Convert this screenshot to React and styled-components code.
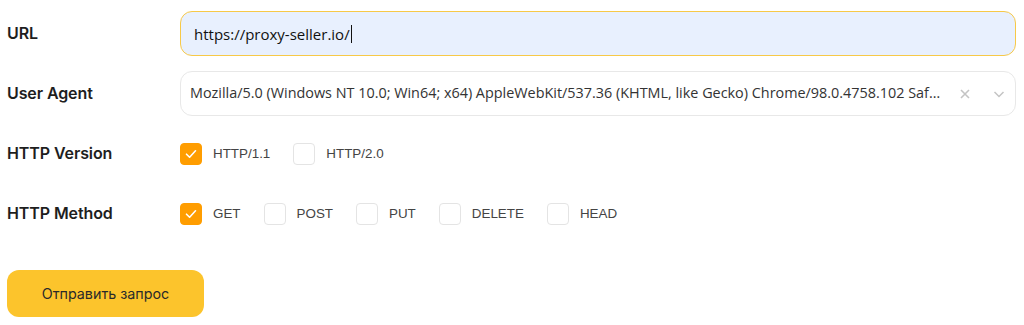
import React from "react"
import styled, { createGlobalStyle } from "styled-components"

const Global = createGlobalStyle`
  body {
    margin: 0;
    background: #fff;
    font-family: Inter, "Noto Sans", sans-serif;
    color: #222;
  }
`

const Form = styled.form`
  display: flex;
  flex-direction: column;
  gap: 15px;
  padding: 11px 8px 0 7px;
`

const Row = styled.div`
  display: grid;
  grid-template-columns: 173px minmax(0, 1fr);
  align-items: center;
  height: 45px;
`

const Label = styled.div`
  font-family: Inter, "Noto Sans", sans-serif;
  font-weight: 600;
  font-size: 16px;
  line-height: 20px;
  margin-top: -2px;
  color: #1e1e1e;
  letter-spacing: -0.1px;
`

const UrlInput = styled.div`
  display: flex;
  align-items: center;
  height: 45px;
  box-sizing: border-box;
  padding: 0 13px;
  background: #e8f0fe;
  border: 1px solid #f7c948;
  border-radius: 12px;
  font-family: "Open Sans", sans-serif;
  font-size: 15px;
  color: #111;
`

const Caret = styled.span`
  display: inline-block;
  width: 1px;
  height: 18px;
  background: #111;
  margin-left: 1px;
`

const Select = styled.div`
  display: flex;
  align-items: center;
  min-width: 0;
  height: 45px;
  box-sizing: border-box;
  padding: 0 9px 0 9px;
  border: 1px solid #e8e8e8;
  border-radius: 12px;
  gap: 13px;
`

const SelectValue = styled.div`
  flex: 1;
  min-width: 0;
  white-space: nowrap;
  overflow: hidden;
  text-overflow: ellipsis;
  font-family: "Open Sans", sans-serif;
  font-size: 14.4px;
  margin-top: -2px;
  color: #333;
`

const SelectIcons = styled.div`
  display: flex;
  flex-shrink: 0;
  align-items: center;
  gap: 21px;
  color: #c4c4c4;
`

const Options = styled.div`
  display: flex;
  align-items: center;
`

const Option = styled.label`
  display: flex;
  align-items: center;
  gap: 11px;
  margin-right: 23px;
  font-family: "Liberation Sans", Arial, sans-serif;
  font-size: 13.4px;
  color: #444;
`

const Box = styled.span`
  display: flex;
  align-items: center;
  justify-content: center;
  width: 22px;
  height: 22px;
  box-sizing: border-box;
  border-radius: 4px;
  background: ${p => (p.checked ? "#ff9d00" : "#fff")};
  border: 1px solid ${p => (p.checked ? "#ff9d00" : "#e4e4e4")};
`

const Button = styled.button`
  align-self: flex-start;
  margin-top: 19px;
  width: 197px;
  height: 47px;
  border: none;
  border-radius: 12px;
  background: #fcc42c;
  font-family: Inter, "Noto Sans", sans-serif;
  font-size: 14.3px;
  color: #2a2a2a;
`

const Check = () => (
  <svg width="14" height="14" viewBox="0 0 14 14" fill="none">
    <path d="M2.5 7.2 L5.6 10.2 L11.5 3.8" stroke="#fff" strokeWidth="1.6" strokeLinecap="round" strokeLinejoin="round" />
  </svg>
)

const CheckItem = ({ checked, children }) => (
  <Option>
    <Box checked={checked}>{checked && <Check />}</Box>
    {children}
  </Option>
)

export default function App() {
  return (
    <>
      <Global />
      <Form>
        <Row>
          <Label>URL</Label>
          <UrlInput>https://proxy-seller.io/<Caret /></UrlInput>
        </Row>
        <Row>
          <Label>User Agent</Label>
          <Select>
            <SelectValue>
              Mozilla/5.0 (Windows NT 10.0; Win64; x64) AppleWebKit/537.36 (KHTML, like Gecko) Chrome/98.0.4758.102 Safari/537.36
            </SelectValue>
            <SelectIcons>
              <svg width="12" height="12" viewBox="0 0 12 12">
                <path d="M2 2 L10 10 M10 2 L2 10" stroke="currentColor" strokeWidth="1.6" />
              </svg>
              <svg width="14" height="14" viewBox="0 0 14 14" fill="none">
                <path d="M2.5 5 L7 9.5 L11.5 5" stroke="currentColor" strokeWidth="1.5" />
              </svg>
            </SelectIcons>
          </Select>
        </Row>
        <Row>
          <Label>HTTP Version</Label>
          <Options>
            <CheckItem checked>HTTP/1.1</CheckItem>
            <CheckItem>HTTP/2.0</CheckItem>
          </Options>
        </Row>
        <Row>
          <Label>HTTP Method</Label>
          <Options>
            <CheckItem checked>GET</CheckItem>
            <CheckItem>POST</CheckItem>
            <CheckItem>PUT</CheckItem>
            <CheckItem>DELETE</CheckItem>
            <CheckItem>HEAD</CheckItem>
          </Options>
        </Row>
        <Button type="button">Отправить запрос</Button>
      </Form>
    </>
  )
}
